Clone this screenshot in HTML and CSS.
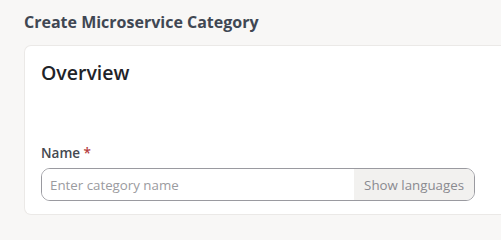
FILE: index.html
```html
<!DOCTYPE html>
<html>
<head>
<meta charset="utf-8">
<link rel="stylesheet" href="styles.css">
</head>
<body>
<div class="page">
  <h1 class="page-title">Create Microservice Category</h1>
  <div class="card">
    <h2 class="card-title">Overview</h2>
    <div class="field">
      <label class="field-label">Name <span class="req">*</span></label>
      <div class="input-group">
        <input class="input" type="text" placeholder="Enter category name">
        <span class="addon">Show languages</span>
      </div>
    </div>
  </div>
</div>
</body>
</html>
```

FILE: styles.css
```css
html, body {
  margin: 0;
  padding: 0;
  background: #f8f7f6;
  overflow: hidden;
  height: 219px;
}
.page {
  font-family: "Open Sans", "Noto Sans", sans-serif;
  padding: 12px 0 0 24px;
}
.page-title {
  margin: 0 0 13px 0;
  font-size: 16px;
  line-height: 20px;
  font-weight: 700;
  color: #404753;
}
.card {
  background: #fff;
  border: 1px solid #ebe9e7;
  border-right: none;
  border-radius: 7px 0 0 7px;
  padding: 13px 16px 13px 16px;
}
.card-title {
  margin: 0;
  font-size: 19.5px;
  line-height: 28px;
  font-weight: 600;
  color: #1f2328;
}
.field {
  margin-top: 57px;
}
.field-label {
  display: block;
  font-size: 13.5px;
  line-height: 18px;
  font-weight: 600;
  color: #444950;
  margin-bottom: 6px;
}
.req {
  color: #b5403f;
}
.input-group {
  display: flex;
  width: 434px;
  height: 33px;
  border: 1px solid #9a9aa0;
  border-radius: 9px;
  box-sizing: border-box;
  overflow: hidden;
}
.input {
  flex: 1;
  min-width: 0;
  border: none;
  outline: none;
  padding: 0 0 0 8px;
  font-family: "Open Sans", "Noto Sans", sans-serif;
  font-size: 13.3px;
  color: #333;
  background: #fff;
}
.input::placeholder {
  color: #9b9ba0;
}
.addon {
  display: flex;
  align-items: center;
  padding: 0 10px 0 10px;
  background: #f2f1ef;
  color: #8a8a8f;
  font-size: 13.3px;
}
```
